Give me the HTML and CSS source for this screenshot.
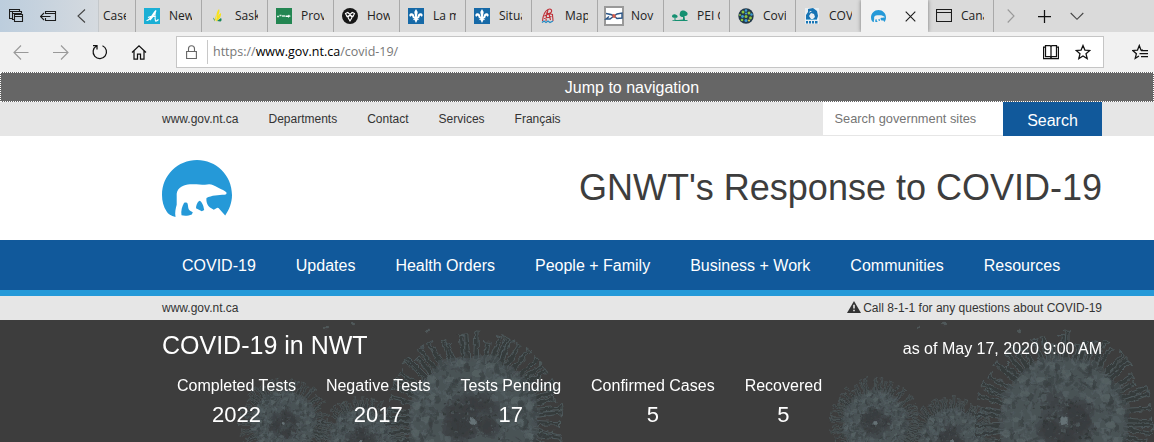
FILE: index.html
```html
<!DOCTYPE html>
<html lang="en">
<head>
<meta charset="utf-8">
<title>GNWT's Response to COVID-19</title>
<link rel="stylesheet" href="styles.css">
</head>
<body>
<svg class="defs" width="0" height="0">
  <symbol id="bear" viewBox="0 0 70 57">
    <path fill="#2599d8" d="M13.500 57C9 56 6 54 4.500 51.300 1.500 47 0 41 0 35 0 15 16 0 35 0s35 15 35 35c0 8-3 15-6.800 20.500L56.500 48l-1.200-.2-3.500 2-3.800-2.300c-3-2-4-7-3.500-9.500 5-2.600 12-3 18-3.200 1.500 0 2.200-.8 2-2.200-1.500-2-5-2.900-8.200-4.800C52 25.500 50 24.200 47 24.300c-5 1-12-.6-19 0-6 .5-12.500 3-13.300 9.400v11c-1 4-2 7-1.200 12.300z"/>
    <path fill="#2599d8" d="M22 43c1.200-.8 3-.6 3.500.4 1 2.600 0 5.600 3 7.600l2.300 1.200-1 2.200c-3.200 1.400-7.500 1.600-10.300.8-.8-4 .6-8.800 2.500-12.200zM37.300 40.700c2 .4 2.800 2.500 4 5.300l.9 4-2.400 1.200-5.800-2.900c0-3 1-5.600 3.300-7.600z"/>
  </symbol>
  <symbol id="fleur" viewBox="0 0 16 16">
    <path fill="#1669a7" d="M0 0h16v16H0z"/>
    <path fill="#fff" d="M8 1l1.700 3-.8 4.500h.8C9.500 6.500 11 5 13 5.300c2 .5 2.300 3 .2 3.700.3-1.200-.5-1.500-1.200-1.100L11.300 9v1.300H9.500l1.800 2-1.700-.5L8 15l-1.600-3.200-1.700.5 1.800-2H4.700V9L4 7.900c-.7-.4-1.500-.1-1.200 1.100C.7 8.300 1 5.800 3 5.300 5 5 6.500 6.500 6.300 8.500h.8L6.300 4z"/>
  </symbol>
</svg>

<header class="tabs">
  <div class="tab-tools">
    <svg width="16" height="16" viewBox="0 0 16 16"><path class="line" d="M3.500 10.500h-3v-9h10v2M.5 3.500h10M5.500 11.500h-2v-8h9v2M3.500 5.500h9M5.500 6.500h8v7h-8zM5.500 8.500h8"/></svg>
    <svg width="17" height="16" viewBox="0 0 17 16"><path class="line" d="M5.500 6V3.500h10v9h-10V10M5.500 5.500h10M.5 8.500h10M4 5L.5 8.500 4 12"/></svg>
    <svg width="9" height="16" viewBox="0 0 9 16"><path class="line thin" d="M8 1.500L1 8l7 6.500"/></svg>
  </div>
  <div class="tab first"><span>Case</span></div>
  <div class="tab"><svg class="fav" viewBox="0 0 16 16"><path fill="#1aafd5" d="M0 0h16v16H0z"/><path fill="none" stroke="#fff" stroke-width="1.100" d="M2.500 12.500C6 13 9 5 12 2.500c-1.500 3-1 8-.5 10.500 1 .5 2-.5 3-1.500M4 9.500c3-1.500 6-1.500 8-.5M11 4c-1 3-2 5-5 8"/></svg><span>New</span></div>
  <div class="tab"><svg class="fav" viewBox="0 0 16 16"><path fill="#f8e21c" d="M9 1c1 1.500.5 5-2.500 9C6 6.500 7 3 9 1zM11 5c.5 3-1.500 6.500-5 8.500 0-4 2-6.500 5-8.500zM5.500 7l.5 5-1.500 1z"/><path fill="#19865a" d="M7 13l4-3c1 1.500.5 3-.5 3.500zM3 9.500l1.500 1.500V13.500z"/></svg><span>Sask</span></div>
  <div class="tab"><svg class="fav" viewBox="0 0 16 16"><path fill="#238652" d="M0 0h16v16H0z"/><path fill="none" stroke="#d8eee2" stroke-width="1.300" d="M1 8.500h2M3.500 7.500h2M6 8h3"/><path fill="#fff" d="M9.500 7.500H12l1-1 .5 1 1.500.5-2 1-.5 1-.5-1h-2.500z"/></svg><span>Prov</span></div>
  <div class="tab"><svg class="fav" viewBox="0 0 16 16"><circle cx="8" cy="8" r="8" fill="#171717"/><path fill="none" stroke="#fff" stroke-width="1.100" d="M3.500 5.500l2.300-1L8 6.500l2.200-2 2.300 1L11 8.500 8 7 5 8.500zM6 9.500L8 7l2 2.500L8 13z"/></svg><span>How</span></div>
  <div class="tab"><svg class="fav"><use href="#fleur"/></svg><span>La m</span></div>
  <div class="tab"><svg class="fav"><use href="#fleur"/></svg><span>Situa</span></div>
  <div class="tab"><svg class="fav" viewBox="0 0 16 16"><path fill="none" stroke="#bf3038" stroke-width="1.100" d="M2.500 13C3 8 5 3 8 1.500c3-1.500 4.500 1 3 3L4.500 8M6 5l6.500 1.500c0 2 .5 4 .5 6.500M4 10.500l7.500-2M8 2c-1 3-2 7-2 11M9 6l1.500 6"/><path fill="none" stroke="#278ac2" stroke-width="1.300" d="M2 14.500l2-1.500 2 1.500 2-1.500 2 1.500 3-1.500"/></svg><span>Map</span></div>
  <div class="tab"><svg class="fav wide" viewBox="0 0 20 20"><path fill="#fff" stroke="#999" stroke-width="2" d="M1 1h18v18H1z"/><path fill="none" stroke="#2a5587" stroke-width="1.400" d="M2 7.500c2 0 3 1 5 1l3 1.500 3-2 5-1v5l-5 .5-3-2.500-4 3H2l3-2.500"/><path fill="#d55b48" d="M8.500 8l3 .5v3.500l-3-.5z"/></svg><span>Nov</span></div>
  <div class="tab"><svg class="fav" viewBox="0 0 16 16"><path fill="#159071" d="M8 5c0-2 2-2.500 3.500-2.500S15 4 15.500 5c.5 2-1 3.500-3 3l.5 4c2 0 3 .5 3 1H0c0-1 4-1 6-1l5-.5V9C8 9 7 7 8 5zM0 8.500C0 6.500 2 6 3.500 6.500S6 8 5.500 9c-.5 1-1.500 1-2 .5V12H2.500V9.500C1.500 10 0 9.500 0 8.500z"/></svg><span>PEI G</span></div>
  <div class="tab"><svg class="fav" viewBox="0 0 16 16"><circle cx="8" cy="8" r="7.700" fill="#23394a"/><g fill="#8bc540"><circle cx="5" cy="4" r="1.500"/><circle cx="11" cy="5" r="1.500"/><circle cx="8" cy="8.500" r="1.500"/><circle cx="4" cy="12" r="1.300"/><circle cx="12.500" cy="10" r="1.400"/><circle cx="2" cy="7" r="1"/></g><g fill="#3c9cd3"><circle cx="8" cy="2.500" r="1.300"/><circle cx="4.500" cy="8.500" r="1.400"/><circle cx="8" cy="12.500" r="1.500"/><circle cx="13.500" cy="6.500" r="1.200"/><circle cx="8" cy="5.500" r="1.100"/></g><circle cx="11" cy="12.500" r="1.100" fill="#d5c83f"/></svg><span>Covid</span></div>
  <div class="tab"><svg class="fav" viewBox="0 0 16 16"><path fill="#e8eef2" d="M1 0h14v16H1z"/><path fill="#1774b4" d="M4 1l5-1 4 3 1 5-1 3H9l2-2-1-3-3-1-2 3 2 3H2V7l2-3zM6 3l-1 2 3-2zM2 13h2v2.500H2zM5 13h2v2.500H5zM8 13h2v2.500H8zM11 13h2.500v2.500H11z"/><path fill="none" stroke="#61add7" d="M2 11.500h11"/></svg><span>COVID</span></div>
  <div class="tab active"><svg class="fav"><use href="#bear" x="1" y="2" width="15" height="12.200"/></svg><svg class="close" viewBox="0 0 11 11"><path class="line" d="M.7.7l9.600 9.600M10.300.7L.7 10.300"/></svg></div>
  <div class="tab last"><svg class="fav" viewBox="0 0 16 16"><path class="line" d="M.5 1.500h15v12H.5zM.5 4.500h15"/></svg><span>Cana</span></div>
  <div class="tab-end">
    <svg width="8" height="16" viewBox="0 0 8 16"><path class="line pale" d="M.7 1.500L7 8 .7 14.500"/></svg>
    <svg width="13" height="16" viewBox="0 0 13 16"><path class="line bold" d="M0 8.500h13M6.500 2v13"/></svg>
    <svg width="14" height="16" viewBox="0 0 14 16"><path class="line thin" d="M.7 5L7 11.300 13.300 5"/></svg>
  </div>
</header>

<div class="toolbar">
  <svg width="16" height="16" viewBox="0 0 16 16"><path class="line pale" d="M15.500 8.500H1M8 1.500l-7 7 7 7"/></svg>
  <svg width="16" height="16" viewBox="0 0 16 16"><path class="line pale" d="M0 8.500h15M8 1.500l7 7-7 7"/></svg>
  <svg class="reload" width="16" height="16" viewBox="0 0 16 16"><path class="line bold" d="M1 1.500h4v4M4.500 2A6.700 6.700 0 1 0 10.500 1.700"/></svg>
  <svg class="home" width="16" height="16" viewBox="0 0 16 16"><path class="line bold" d="M1 8.500L8 1.800l7 6.700M3 7v8h3.500v-5h3v5H13V7"/></svg>
  <div class="address">
    <svg class="lock" width="11" height="14" viewBox="0 0 11 14"><path class="line grey" d="M.6 6.500h9.800v7H.6zM2.500 6.500V3.800a3 3 0 0 1 6 0v2.700"/></svg>
    <span class="url">https://<b>www.gov.nt.ca</b>/covid-19/</span>
    <svg width="16" height="16" viewBox="0 0 16 16"><path class="line bold" d="M2.500 1.500H7l1 1 1-1h4.500v11H9l-1 1-1-1H2.500zM8 2v12M2.500 3h-2v11.500h15V3h-2"/></svg>
    <svg width="16" height="16" viewBox="0 0 16 16"><path class="line bold" d="M8 1.500l1.900 4.600 4.900.4-3.800 3.200 1.200 4.900L8 12l-4.200 2.600L5 9.700 1.200 6.500l4.900-.4z"/></svg>
  </div>
  <svg class="favs" width="16" height="16" viewBox="0 0 16 16"><path class="line bold" d="M11 6.100H9L7.300 1.500 5.500 6.100.8 6.500 4.400 9.700l-1.200 4.600L7 12M9 6.500h7M7.500 9.500H16M9 12.500h7"/></svg>
</div>

<a class="jump">Jump to navigation</a>

<div class="topbar">
  <nav class="wrap">
    <a>www.gov.nt.ca</a><a>Departments</a><a>Contact</a><a>Services</a><a>Français</a>
    <div class="search"><div class="field">Search government sites</div><div class="button">Search</div></div>
  </nav>
</div>

<div class="brand wrap">
  <svg width="70" height="57"><use href="#bear"/></svg>
  <h1>GNWT's Response to COVID-19</h1>
</div>

<div class="mainnav">
  <nav class="wrap"><a>COVID-19</a><a>Updates</a><a>Health Orders</a><a>People + Family</a><a>Business + Work</a><a>Communities</a><a>Resources</a></nav>
</div>

<div class="notice">
  <div class="wrap">
    <a>www.gov.nt.ca</a>
    <span><svg width="14" height="12" viewBox="0 0 14 12"><path fill="#333" d="M7 0l7 12H0z"/><path stroke="#e6e6e6" stroke-width="1.600" d="M7 3.800v3.700M7 8.700v1.500"/></svg>Call 8-1-1 for any questions about COVID-19</span>
  </div>
</div>

<section class="stats">
  <svg class="virus" width="1154" height="122" viewBox="0 0 1154 122">
    <filter id="rough" x="-5%" y="-5%" width="110%" height="110%">
      <feTurbulence type="fractalNoise" baseFrequency=".18" numOctaves="2" seed="4" result="n"/>
      <feDisplacementMap in="SourceGraphic" in2="n" scale="5" xChannelSelector="R" yChannelSelector="G"/>
      <feGaussianBlur stdDeviation=".35"/>
    </filter>
    <g id="virus" filter="url(#rough)"></g>
  </svg>
  <div class="wrap">
    <div class="stats-head"><h2>COVID-19 in NWT</h2><span>as of May 17, 2020 9:00 AM</span></div>
    <div class="figures">
      <div><span>Completed Tests</span><b>2022</b></div>
      <div><span>Negative Tests</span><b>2017</b></div>
      <div><span>Tests Pending</span><b>17</b></div>
      <div><span>Confirmed Cases</span><b>5</b></div>
      <div><span>Recovered</span><b>5</b></div>
    </div>
  </div>
</section>
<script src="virus.js"></script>
</body>
</html>
```
FILE: styles.css
```css
* { box-sizing: border-box; }
body { margin: 0; width: 1154px; height: 442px; overflow: hidden; background: #fff; color: #333; font-family: "Liberation Sans", Arial, sans-serif; font-size: 12px; }
svg { display: block; flex: none; }
.defs { position: absolute; }
.line { fill: none; stroke: #1c1c1c; stroke-width: 1.1; }
.thin { stroke: #444; }
.bold { stroke: #111; stroke-width: 1.25; }
.pale { stroke: #999; }
.grey { stroke: #666; }
.wrap { width: 940px; margin-left: 162px; display: flex; }

/* Browser chrome */
.tabs { display: flex; height: 32px; background: #dadada; font-family: "Open Sans", "Noto Sans", sans-serif; font-size: 12px; color: #222; }
.tab-tools { width: 98px; display: flex; align-items: center; padding-left: 9px; background: linear-gradient(90deg, #bccddd, #d5dadf); }
.tab-tools svg:nth-child(2) { margin-left: 15px; }
.tab-tools svg:nth-child(3) { margin-left: 20px; }
.tab { width: 66px; flex: none; display: flex; align-items: center; padding-left: 8px; border-left: 1px solid #a9a9a9; }
.tab span { width: 23px; margin-left: 9px; overflow: hidden; white-space: nowrap; line-height: 20px; }
.tab.first { width: 37px; padding-left: 4px; border-color: #c4c8cb; }
.tab.first span { margin-left: 0; }
.fav { width: 16px; height: 16px; }
.fav.wide { width: 20px; height: 20px; margin: 0 -2px; }
.tab.active { width: 67px; background: #f1f1f1; border: 0; padding-left: 9px; box-shadow: 0 0 4px #777; clip-path: inset(0 -5px); z-index: 1; }
.close { width: 11px; height: 11px; margin-left: 19px; }
.tab.last { border-left: 0; border-right: 1px solid #a9a9a9; }
.tab-end { display: flex; align-items: center; padding-left: 13px; }
.tab-end svg:nth-child(2) { margin-left: 23px; }
.tab-end svg:nth-child(3) { margin-left: 19px; }
.toolbar { height: 40px; background: #f1f1f1; display: flex; align-items: center; padding-left: 13px; font-family: "Open Sans", "Noto Sans", sans-serif; gap: 24px; }
.reload, .home { margin-right: 0; }
.home { margin-left: -1px; }
.reload { margin-left: -1px; }
.address { width: 928px; height: 32px; flex: none; margin-left: 5px; background: #fff; border: 1px solid #c5c5c5; display: flex; align-items: center; padding: 0 12px 0 9px; }
.lock { margin-right: 10px; }
.url { flex: 1; border-left: 1px solid #c8c8c8; padding-left: 5px; line-height: 24px; font-size: 12.5px; color: #777; }
.url b { font-weight: 400; color: #000; }
.address > svg:last-child { margin-left: 16px; }
.favs { margin-left: 4px; }

/* Site header */
.jump { display: block; height: 30px; border: 1px dotted #fff; background: #666; color: #fff; font-size: 16px; line-height: 29px; text-align: center; padding-left: 110px; }
.topbar { height: 34px; background: #e6e6e6; }
.topbar .wrap { gap: 30px; line-height: 34px; }
.search { display: flex; margin-left: auto; }
.field { width: 180px; height: 33px; background: #fff; padding-left: 11.5px; color: #757575; font-size: 12.8px; line-height: 33px; letter-spacing: .01px; }
.button { width: 99px; height: 34px; background: #11599b; color: #fff; font-size: 16px; line-height: 37px; text-align: center; }
.brand { height: 104px; justify-content: space-between; padding-top: 24px; }
h1 { margin: 0; font-size: 36px; font-weight: 400; line-height: 56px; color: #3d3d3d; }
.mainnav { height: 56px; background: #11599b; border-bottom: 6px solid #2599d8; }
.mainnav a { padding: 0 20px; color: #fff; font-size: 16px; line-height: 51px; white-space: nowrap; }
.notice { height: 24px; background: #e6e6e6; line-height: 24px; }
.notice .wrap { justify-content: space-between; }
.notice span { display: flex; align-items: center; gap: 2px; }
.notice span svg { margin-top: -2px; }

/* Case statistics */
.stats { position: relative; height: 122px; background: #3d3d3d; color: #fff; }
.virus { position: absolute; left: 0; top: 0; }
.stats .wrap { position: relative; flex-direction: column; }
.stats-head { height: 54px; display: flex; justify-content: space-between; font-size: 16px; }
h2 { margin: 0; font-size: 25px; font-weight: 400; line-height: 51px; }
.stats-head span { line-height: 57px; }
.figures { display: flex; font-size: 16px; text-align: center; }
.figures div { padding: 0 15px; }
.figures span, .figures b { display: block; }
.figures span { line-height: 23px; }
.figures b { font-size: 22px; font-weight: 400; line-height: 36px; }
```
FILE: virus.js
```javascript
// Draws the spiked virus particles behind the case statistics.
const NS = 'http://www.w3.org/2000/svg';
const layer = document.getElementById('virus');
let seed = 7;
const rand = () => (seed = (seed * 16807) % 2147483647) / 2147483647;

function add(tag, attrs) {
  const el = document.createElementNS(NS, tag);
  for (const key in attrs) el.setAttribute(key, attrs[key]);
  layer.appendChild(el);
}

function particle(cx, cy, body, reach) {
  const k = body / 65;
  const at = (a, r) => [cx + Math.cos(a) * r, cy + Math.sin(a) * r];
  const count = 60;
  for (let i = 0; i < count; i++) {
    const a = (i + rand() * 0.9) / count * Math.PI * 2;
    const end = reach - rand() * rand() * (reach - body) * 0.8;
    const w = 1.5 * k;
    const [x1, y1] = at(a, body - 9 * k);
    const [x2, y2] = at(a + (rand() - 0.5) * 0.06, end);
    const [x3, y3] = at(a, end + 2 * k);
    const px = -Math.sin(a) * w, py = Math.cos(a) * w;
    const d = `M${x1 - px * 1.7} ${y1 - py * 1.7}L${x2 - px} ${y2 - py}L${x3 - px * 2} ${y3 - py * 2}L${x3 + px * 2} ${y3 + py * 2}L${x2 + px} ${y2 + py}L${x1 + px * 1.7} ${y1 + py * 1.7}`;
    add('path', { d, fill: '#363b3c', stroke: '#536063', 'stroke-width': 0.4 + 0.5 * k, opacity: 0.9 });
  }
  // Uneven outer shell
  for (let i = 0; i < 46; i++) {
    const [x, y] = at(i / 46 * Math.PI * 2, body * (0.84 + rand() * 0.06));
    add('circle', { cx: x, cy: y, r: (5 + rand() * 3) * k, fill: '#4c5659', opacity: 0.55 });
  }
  add('circle', { cx, cy, r: body * 0.88, fill: '#495255' });
  for (let i = 0; i < 420; i++) {
    const r = body * Math.sqrt(0.22 + rand() * 0.64);
    const [x, y] = at(rand() * Math.PI * 2, r);
    add('ellipse', { cx: x, cy: y, rx: (1 + rand() * 4.5) * k, ry: (0.5 + rand() * 1.4) * k,
      transform: `rotate(${rand() * 180} ${x} ${y})`, fill: rand() > 0.42 ? '#566164' : '#3b4143', opacity: 0.55 });
  }
  for (let i = 0; i < 24; i++) {
    const [x, y] = at(i / 24 * Math.PI * 2 + rand() * 0.1, body * (0.7 + (i % 2) * 0.16));
    add('ellipse', { cx: x, cy: y, rx: 5 * k, ry: 3.5 * k, fill: '#5b676a', opacity: 0.55 });
    add('ellipse', { cx: x + 5 * k, cy: y + 3 * k, rx: 2.2 * k, ry: 4 * k, fill: '#363c3d', opacity: 0.6 });
  }
  for (let i = 0; i < 40; i++) {
    const [x, y] = at(rand() * Math.PI * 2, body * 0.38 * Math.sqrt(rand()));
    add('circle', { cx: x, cy: y, r: 8 * k, fill: '#383d3e', opacity: 0.35 });
  }
  for (let i = 0; i < 150; i++) {
    const [x, y] = at(rand() * Math.PI * 2, body * 0.5 * Math.sqrt(rand()));
    add('circle', { cx: x, cy: y, r: (0.4 + rand()) * k, fill: rand() > 0.5 ? '#4f595c' : '#303536', opacity: 0.75 });
  }
  for (let i = 0; i < 8; i++) {
    const [x, y] = at(i * 0.78 + rand() * 0.2, body * (0.38 + rand() * 0.12));
    add('circle', { cx: x, cy: y, r: 3.2 * k, fill: '#566164', opacity: 0.65 });
  }
  add('circle', { cx, cy, r: 3.6 * k, fill: '#657175' });
}

for (const x of [0, 591]) {
  particle(x + 361, 121, 34, 44);
  particle(x + 284, 103, 34, 45);
  particle(x + 473, 101, 68, 89);
  for (const [dx, dy] of [[327, 8], [353, 4], [428, 11]]) {
    add('ellipse', { cx: x + dx, cy: dy, rx: 2.2, ry: 1.3, fill: '#50585a' });
  }
}
```
